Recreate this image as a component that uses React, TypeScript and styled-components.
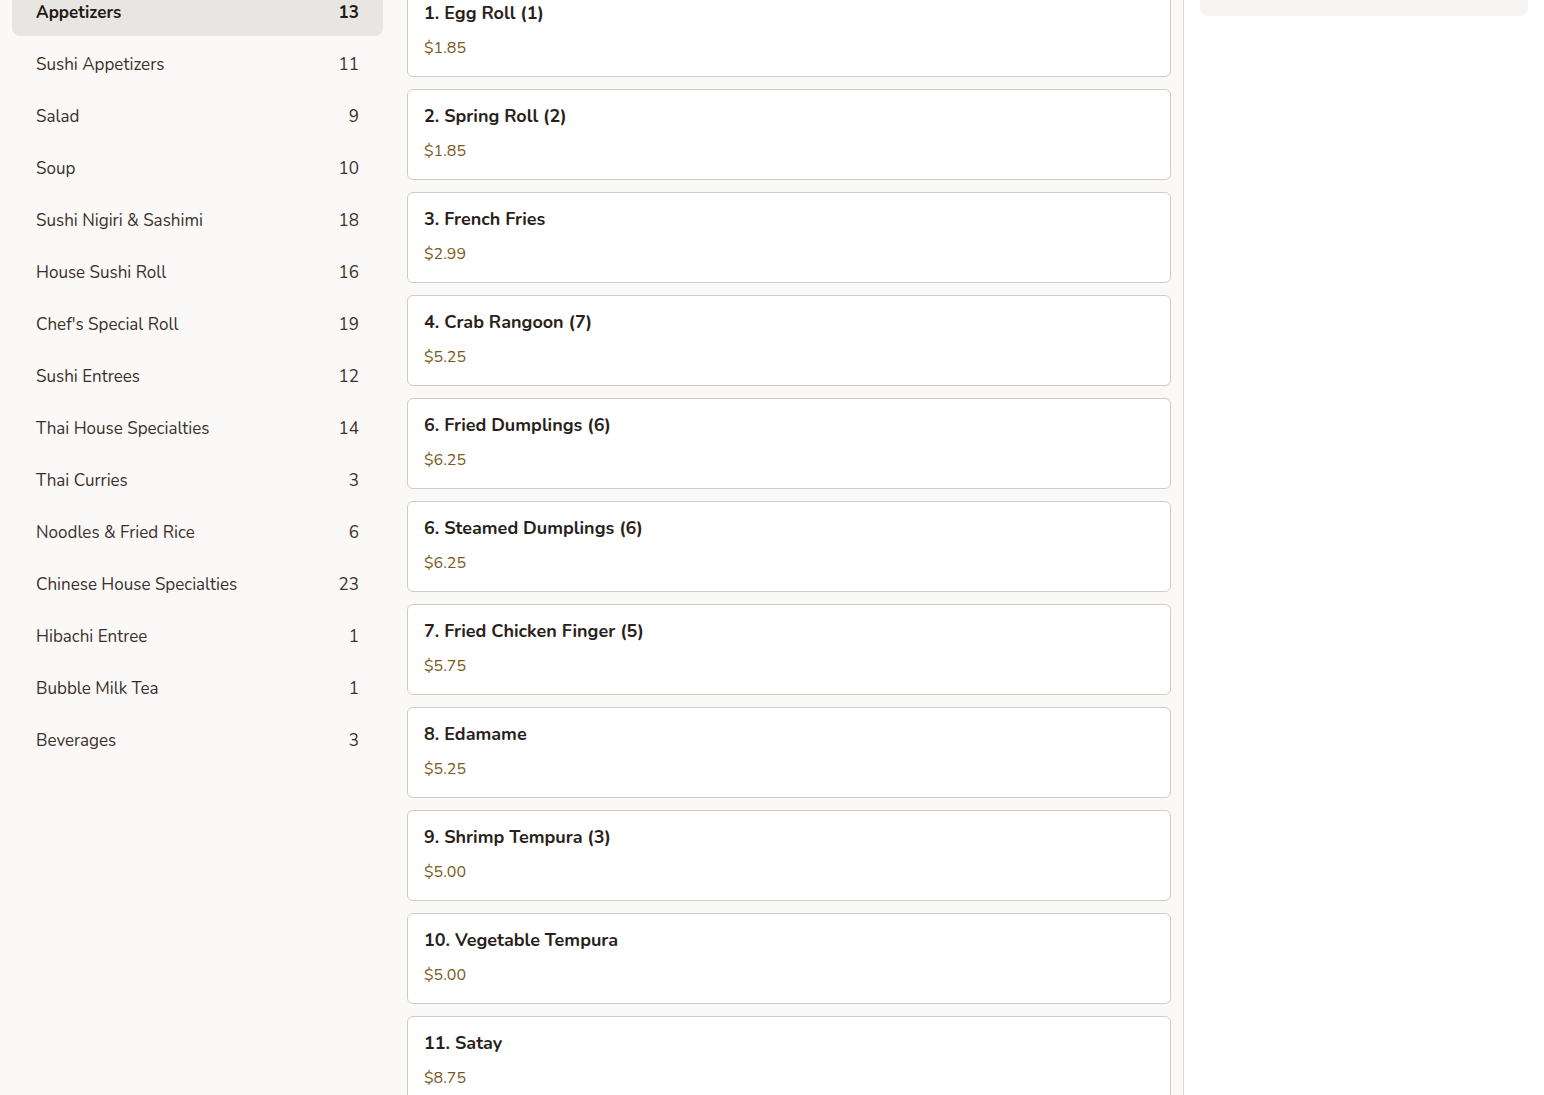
import React from 'react';
import styled, { createGlobalStyle } from 'styled-components';

interface Category {
  name: string;
  count: number;
}

interface MenuItem {
  name: string;
  price: string;
}

const categories: Category[] = [
  { name: 'Appetizers', count: 13 },
  { name: 'Sushi Appetizers', count: 11 },
  { name: 'Salad', count: 9 },
  { name: 'Soup', count: 10 },
  { name: 'Sushi Nigiri & Sashimi', count: 18 },
  { name: 'House Sushi Roll', count: 16 },
  { name: "Chef's Special Roll", count: 19 },
  { name: 'Sushi Entrees', count: 12 },
  { name: 'Thai House Specialties', count: 14 },
  { name: 'Thai Curries', count: 3 },
  { name: 'Noodles & Fried Rice', count: 6 },
  { name: 'Chinese House Specialties', count: 23 },
  { name: 'Hibachi Entree', count: 1 },
  { name: 'Bubble Milk Tea', count: 1 },
  { name: 'Beverages', count: 3 },
];

const items: MenuItem[] = [
  { name: '1. Egg Roll (1)', price: '$1.85' },
  { name: '2. Spring Roll (2)', price: '$1.85' },
  { name: '3. French Fries', price: '$2.99' },
  { name: '4. Crab Rangoon (7)', price: '$5.25' },
  { name: '6. Fried Dumplings (6)', price: '$6.25' },
  { name: '6. Steamed Dumplings (6)', price: '$6.25' },
  { name: '7. Fried Chicken Finger (5)', price: '$5.75' },
  { name: '8. Edamame', price: '$5.25' },
  { name: '9. Shrimp Tempura (3)', price: '$5.00' },
  { name: '10. Vegetable Tempura', price: '$5.00' },
  { name: '11. Satay', price: '$8.75' },
];

const GlobalStyle = createGlobalStyle`
  html, body {
    margin: 0;
    padding: 0;
    background: #faf9f7;
    overflow: hidden;
  }
  body {
    font-family: "Nunito", "Lato", "Open Sans", sans-serif;
    color: #2b211c;
  }
`;

const Layout = styled.div`
  display: grid;
  grid-template-columns: 395px 1fr 361px;
  margin-top: -26px;
  min-height: calc(100vh + 26px);
`;

const Sidebar = styled.nav`
  background: #faf9f7;
  padding: 14px 12px 12px;
  display: flex;
  flex-direction: column;
  gap: 4px;
`;

const CategoryRow = styled.div<{ $active?: boolean }>`
  height: 48px;
  display: flex;
  align-items: center;
  justify-content: space-between;
  padding: 0 24px;
  border-radius: 8px;
  font-size: 17px;
  background: ${(p) => (p.$active ? '#e8e6e3' : 'transparent')};
  font-weight: ${(p) => (p.$active ? 700 : 400)};
  color: ${(p) => (p.$active ? '#241a15' : '#3a302b')};
`;

const Main = styled.main`
  padding: 12px;
  display: flex;
  flex-direction: column;
  gap: 12px;
`;

const Card = styled.div`
  background: #ffffff;
  border: 1px solid #cfcbc6;
  border-radius: 6px;
  padding: 15px 16px 18px;
`;

const ItemName = styled.div`
  font-size: 18px;
  line-height: 22px;
  font-weight: 700;
  color: #2a1f1b;
  margin-bottom: 14px;
`;

const ItemPrice = styled.div`
  font-size: 16px;
  line-height: 20px;
  color: #7a5a1c;
`;

const Aside = styled.aside`
  background: #ffffff;
  border-left: 1px solid #dcd8d3;
  padding: 16px;
`;

const CartBox = styled.div`
  height: 26px;
  background: #f6f5f3;
  border-radius: 8px;
`;

export default function App() {
  return (
    <>
      <GlobalStyle />
      <Layout>
        <Sidebar>
          {categories.map((c, i) => (
            <CategoryRow key={c.name} $active={i === 0}>
              <span>{c.name}</span>
              <span>{c.count}</span>
            </CategoryRow>
          ))}
        </Sidebar>
        <Main>
          {items.map((item) => (
            <Card key={item.name}>
              <ItemName>{item.name}</ItemName>
              <ItemPrice>{item.price}</ItemPrice>
            </Card>
          ))}
        </Main>
        <Aside>
          <CartBox />
        </Aside>
      </Layout>
    </>
  );
}
